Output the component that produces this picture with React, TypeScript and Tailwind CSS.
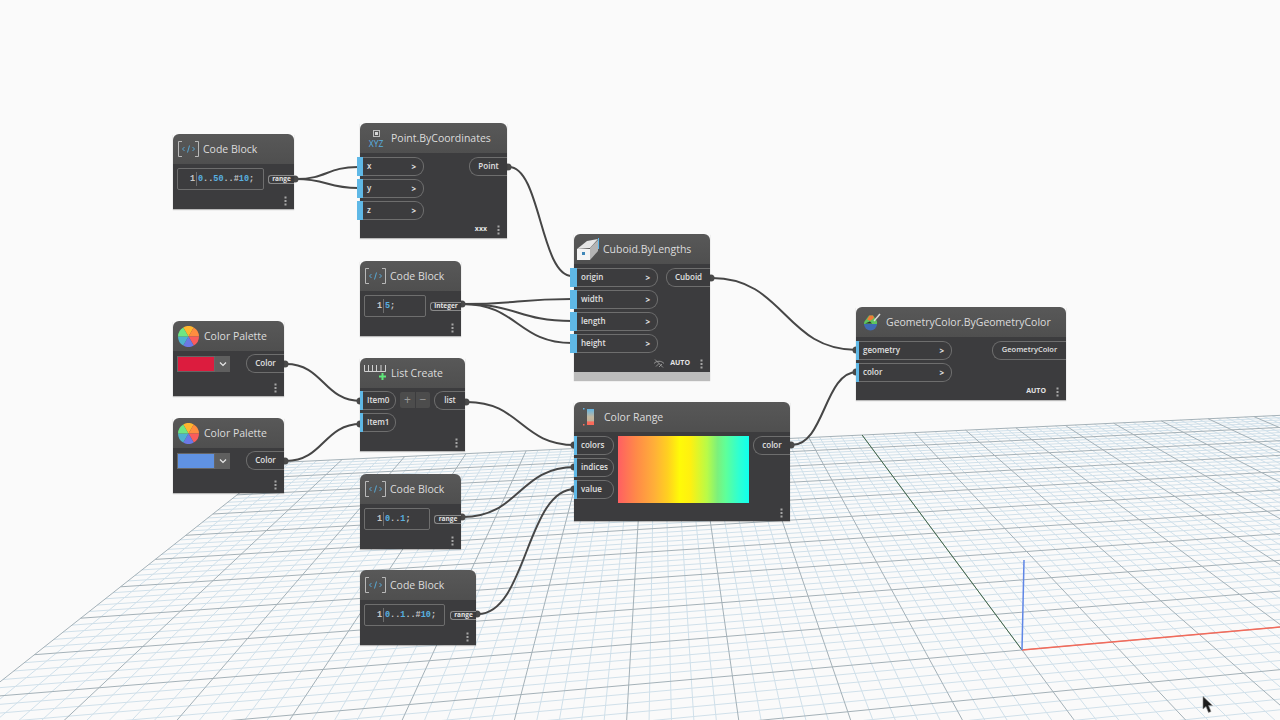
import React from "react";

// ground plane projection, fitted from the axes in the reference
const O = { x: 1022, y: 650 };
const VP_U = { x: 6326, y: 178 };
const VP_V = { x: 659, y: 162 };
const A = 0.01726;
const B = 0.07875;

function project(u: number, v: number) {
  const d = 1 + u * A + v * B;
  return {
    x: (O.x + u * A * VP_U.x + v * B * VP_V.x) / d,
    y: (O.y + u * A * VP_U.y + v * B * VP_V.y) / d,
  };
}

function gridLine(u1: number, v1: number, u2: number, v2: number) {
  const a = project(u1, v1);
  const b = project(u2, v2);
  return `M${a.x.toFixed(1)} ${a.y.toFixed(1)}L${b.x.toFixed(1)} ${b.y.toFixed(1)}`;
}

function Grid() {
  const minor: string[] = [];
  const major: string[] = [];
  for (let i = -50; i <= 50; i++) {
    const t = i / 5;
    const list = i % 5 === 0 ? major : minor;
    list.push(gridLine(t, -9.8, t, 10));
    list.push(gridLine(-10, t, 10, t));
  }
  const blueTop = project(0, 0);
  return (
    <svg className="absolute inset-0" width={1280} height={720}>
      <path d={minor.join("")} stroke="#d0e0ea" strokeWidth={1} fill="none" />
      <path d={major.join("")} stroke="#a4b1b8" strokeWidth={1} fill="none" />
      <path d={gridLine(0, 0, 0, 10)} stroke="#42684a" strokeWidth={1} fill="none" />
      <path d={gridLine(0, 0, 10, 0)} stroke="#f46a5a" strokeWidth={1.5} fill="none" />
      <path d={`M${blueTop.x} ${blueTop.y}L1024 560`} stroke="#5f86e6" strokeWidth={1.5} fill="none" />
    </svg>
  );
}

const wires: [number, number, number, number][] = [
  [296, 179, 358, 167],
  [296, 179, 358, 188],
  [509, 167, 572, 276],
  [463, 304, 572, 299],
  [463, 304, 572, 321],
  [463, 304, 572, 343],
  [712, 278, 857, 350],
  [286, 364, 361, 401],
  [286, 461, 361, 424],
  [467, 402, 575, 445],
  [463, 517, 575, 467],
  [478, 614, 575, 489],
  [792, 445, 857, 372],
];

const pins: [number, number][] = [
  [295, 179], [508, 167], [462, 304], [711, 278], [285, 364], [285, 461],
  [466, 402], [462, 517], [477, 614], [791, 445],
  [360, 401], [360, 424], [574, 445], [574, 467], [574, 489], [856, 350], [856, 372],
];

function Wires() {
  return (
    <svg className="absolute inset-0" width={1280} height={720}>
      {wires.map(([x1, y1, x2, y2], i) => {
        const mx = (x1 + x2) / 2;
        return (
          <path
            key={i}
            d={`M${x1} ${y1}C${mx} ${y1} ${mx} ${y2} ${x2} ${y2}`}
            stroke="#464646"
            strokeWidth={2}
            fill="none"
          />
        );
      })}
      {pins.map(([x, y], i) => (
        <circle key={i} cx={x} cy={y} r={3.5} fill="#4a4a4a" />
      ))}
    </svg>
  );
}

function Dots() {
  return (
    <svg width={3} height={10} viewBox="0 0 3 10">
      <rect x={0.5} y={0.5} width={2} height={2} fill="#a6a6a6" />
      <rect x={0.5} y={4} width={2} height={2} fill="#a6a6a6" />
      <rect x={0.5} y={7.5} width={2} height={2} fill="#a6a6a6" />
    </svg>
  );
}

function CodeIcon() {
  return (
    <svg width={21} height={16} viewBox="0 0 21 16" fill="none" className="shrink-0">
      <path d="M4 .5H.5v15H4M17 .5h3.500v15H17" stroke="#b8b8b8" />
      <path d="M6.500 6 4.500 8 6.500 10M14.500 6 16.500 8 14.500 10" stroke="#58b0e0" strokeWidth={0.9} />
      <path d="M11.500 4.500 9.500 11.500" stroke="#58b0e0" strokeWidth={0.9} />
    </svg>
  );
}

function PointIcon() {
  return (
    <div className="flex flex-col items-center w-[22px] shrink-0 mt-[2px]">
      <svg width={7} height={7} viewBox="0 0 7 7" fill="none">
        <rect x={0.5} y={0.5} width={6} height={6} stroke="#bdbdbd" />
        <rect x={2} y={2} width={3} height={3} fill="#d8d8d8" />
      </svg>
      <span className="text-[8.5px] leading-[10px] mt-[2px] text-[#58b0e0]">XYZ</span>
    </div>
  );
}

function wedge(start: number, end: number) {
  const r = 10.5;
  const p = (deg: number) => {
    const t = (deg * Math.PI) / 180;
    return `${(10.5 + r * Math.sin(t)).toFixed(2)} ${(10.5 - r * Math.cos(t)).toFixed(2)}`;
  };
  return `M10.5 10.5L${p(start)}A${r} ${r} 0 0 1 ${p(end)}Z`;
}

function WheelIcon() {
  const colors = ["#ffb52e", "#ff8d3f", "#fa5c5c", "#6c78e6", "#4fb2cf", "#6fe682"];
  return (
    <svg width={21} height={21} viewBox="0 0 21 21" className="shrink-0 mr-[1px]">
      {colors.map((c, i) => (
        <path key={c} d={wedge(-30 + i * 60, 30 + i * 60)} fill={c} />
      ))}
    </svg>
  );
}

function ListIcon() {
  return (
    <svg width={23} height={20} viewBox="0 0 23 20" fill="none" className="shrink-0 mt-[2px] -ml-[1px]">
      <path d="M.5 1v6.500h21V1M4.500 1v6.500M8.500 1v6.500M12.500 1v6.500M17 1v6.500M21.500 1v6.500" stroke="#d0d0d0" />
      <path d="M18.500 9v7M15 12.500h7" stroke="#5fe87a" strokeWidth={2} />
    </svg>
  );
}

function CuboidIcon() {
  return (
    <svg width={23} height={24} viewBox="0 0 23 24" className="shrink-0 -ml-[3px]">
      <path d="M1 12 11 4 22 2 14 11Z" fill="#e6e6e6" />
      <path d="M1 12H14V23H1Z" fill="#f4f4f4" />
      <path d="M14 11 22 3V14L14 23Z" fill="#b4b4b4" />
      <path d="M22.500 1V12" stroke="#5fb8ea" strokeWidth={1} />
      <rect x={6} y={15} width={3} height={3} fill="#3f87b8" />
    </svg>
  );
}

function RangeIcon() {
  return (
    <svg width={17} height={18} viewBox="0 0 17 18" className="shrink-0 ml-[4px]">
      <defs>
        <linearGradient id="rangeBar" x1="0" y1="0" x2="0" y2="1">
          <stop offset="0" stopColor="#62b4e2" />
          <stop offset="0.5" stopColor="#c4b8a0" />
          <stop offset="0.75" stopColor="#bdb29c" />
          <stop offset="0.8" stopColor="#fa6a5a" />
          <stop offset="1" stopColor="#fa6a5a" />
        </linearGradient>
      </defs>
      <rect x={4} y={1} width={7} height={16} fill="url(#rangeBar)" />
      <rect x={0} y={0} width={1.500} height={1.500} fill="#62b4e2" />
      <rect x={0} y={16} width={1.500} height={1.500} fill="#fa6a5a" />
    </svg>
  );
}

function GeometryIcon() {
  return (
    <svg width={19} height={18} viewBox="0 0 19 18" className="shrink-0 ml-[2px]">
      <path d="M1 11a6.500 6.500 0 0 0 13 0Z" fill="#3f6bb4" />
      <path d="M1 11a6.500 6.500 0 0 1 2-4.500L6 2.500h4l3 4a6.500 6.500 0 0 1 1 4.500Z" fill="#5ec45e" />
      <path d="M4 6.500 6.500 2.500h3.500L11 5 7 8Z" fill="#f07a38" />
      <path d="M2 10.500 7 8.500l2 2Z" fill="#2e2e2e" />
      <path d="M11 8 17 1" stroke="#d8d8d8" strokeWidth={1.500} />
    </svg>
  );
}

function Freeze() {
  return (
    <svg width={12} height={9} viewBox="0 0 12 9" fill="none" stroke="#a8a8a8" strokeWidth={0.8}>
      <path d="M1 4.500C3.500 1.500 8.500 1.500 11 4.500M3 7.500 6 4.500M6 8 9 5" />
      <path d="M2 .5 10 8.500" />
    </svg>
  );
}

function Port({ label, strip, w }: { label: string; strip: string; w: string }) {
  return (
    <div className={`relative flex items-center justify-between h-[19px] pl-[7px] pr-[7px] border border-l-0 border-[#6e6e6e] rounded-r-[9px] ${w}`}>
      <span className={`absolute top-[-1px] bottom-[-1px] bg-[#5fb8e6] ${strip}`} />
      <span className="relative mt-[-2px] text-[8px] font-semibold text-[#e0e0e0]">{label}</span>
      <span className="text-[8px] font-bold text-[#e4e4e4]">&gt;</span>
    </div>
  );
}

function PlainPort({ label, strip, w }: { label: string; strip: string; w: string }) {
  return (
    <div className={`relative flex items-center h-[19px] pl-[7px] border border-l-0 border-[#6e6e6e] rounded-r-[9px] ${w}`}>
      <span className={`absolute top-[-1px] bottom-[-1px] bg-[#5fb8e6] ${strip}`} />
      <span className="mt-[-2px] text-[8px] font-semibold text-[#e0e0e0]">{label}</span>
    </div>
  );
}

function Output({ label, w, size = "text-[8px]" }: { label: string; w: string; size?: string }) {
  return (
    <div className={`flex items-center justify-center h-[19px] border border-r-0 border-[#6e6e6e] rounded-l-[9px] ${w}`}>
      <span className={`mt-[-2px] font-semibold text-[#e0e0e0] ${size}`}>{label}</span>
    </div>
  );
}

function Node({
  className,
  title,
  icon,
  footer,
  children,
  strip,
}: {
  className: string;
  title: string;
  icon: React.ReactNode;
  footer?: React.ReactNode;
  children: React.ReactNode;
  strip?: boolean;
}) {
  return (
    <div className={`absolute flex flex-col shadow-[0_1px_1px_rgba(0,0,0,0.25)] ${className}`}>
      <div className="flex items-center gap-[4px] h-[30px] shrink-0 pl-[5px] rounded-t-[6px] bg-[linear-gradient(#585858,#4f4f4f)]">
        {icon}
        <span className="text-[10.5px] leading-none text-[#dcdcdc] whitespace-nowrap">{title}</span>
      </div>
      <div className="flex-1 flex flex-col min-h-0 bg-[#3c3c3e]">
        <div className="flex-1 pt-[4px]">{children}</div>
        <div className="flex items-center justify-end gap-[10px] h-[17px] pr-[7px] shrink-0">
          {footer}
          <Dots />
        </div>
      </div>
      {strip && <div className="h-[8px] shrink-0 bg-[#bcbcbc]" />}
    </div>
  );
}

// digits are blue in the code editor, punctuation stays light
function CodeText({ code }: { code: string }) {
  const parts = code.split(/(\d+)/).filter(Boolean);
  return (
    <span className="pl-[1px] whitespace-nowrap">
      {parts.map((p, i) => (
        <span key={i} className={/\d/.test(p) ? "text-[#58b0e0]" : "text-[#c8c8c8]"}>
          {p}
        </span>
      ))}
    </span>
  );
}

function CodeRow({ code, label, editor, out }: { code: string; label: string; editor: string; out: string }) {
  return (
    <div className="flex items-center justify-between pl-[4px]">
      <div className={`flex items-center h-[22px] border border-[#6e6e6e] rounded-[2px] font-['Liberation_Mono',monospace] font-bold text-[8.5px] ${editor}`}>
        <span className="w-[19px] text-right pr-[1px] text-[#c8c8c8] border-r border-[#6e6e6e] leading-[14px]">1</span>
        <CodeText code={code} />
      </div>
      <div className={`flex items-center justify-center h-[9px] border border-r-0 border-[#8a8a8a] rounded-l-[3px] ${out}`}>
        <span className="text-[6.5px] font-bold leading-none text-[#e4e4e4]">{label}</span>
      </div>
    </div>
  );
}

function Swatch({ color }: { color: string }) {
  return (
    <div className="flex items-center justify-between pl-[4px]">
      <div className="flex w-[53px] h-[16px] bg-[#5f5f5f]">
        <div className={`w-[38px] h-full border border-[#666] ${color}`} />
        <div className="flex-1 flex items-center justify-center">
          <svg width={8} height={5} viewBox="0 0 8 5" fill="none" stroke="#e8e8e8" strokeWidth={1.200}>
            <path d="M1 .5 4 3.500 7 .5" />
          </svg>
        </div>
      </div>
      <Output label="Color" w="w-[38px] mt-[-1px]" />
    </div>
  );
}

const auto = <span className="text-[7px] font-bold text-[#e4e4e4]">AUTO</span>;

export default function App() {
  return (
    <div className="relative w-[1280px] h-[720px] overflow-hidden bg-[#fafafa] font-['Open_Sans',sans-serif]">
      <Grid />
      <Wires />

      <Node className="left-[173px] top-[134px] w-[121px] h-[75px]" title="Code Block" icon={<CodeIcon />}>
        <CodeRow code="0..50..#10;" label="range" editor="w-[87px]" out="w-[26px]" />
      </Node>

      <Node
        className="left-[360px] top-[123px] w-[147px] h-[115px]"
        title="Point.ByCoordinates"
        icon={<PointIcon />}
        footer={<span className="text-[7px] font-bold text-[#e4e4e4]">xxx</span>}
      >
        <div className="flex justify-between">
          <div className="flex flex-col gap-[3px]">
            <Port label="x" w="w-[64px]" strip="-left-[3px] w-[6px]" />
            <Port label="y" w="w-[64px]" strip="-left-[3px] w-[6px]" />
            <Port label="z" w="w-[64px]" strip="-left-[3px] w-[6px]" />
          </div>
          <Output label="Point" w="w-[38px]" />
        </div>
      </Node>

      <Node className="left-[360px] top-[261px] w-[101px] h-[75px]" title="Code Block" icon={<CodeIcon />}>
        <CodeRow code="5;" label="integer" editor="w-[62px]" out="w-[31px]" />
      </Node>

      <Node
        className="left-[574px] top-[234px] w-[136px] h-[146px]"
        title="Cuboid.ByLengths"
        icon={<CuboidIcon />}
        strip
        footer={
          <div className="flex items-center gap-[5px]">
            <Freeze />
            {auto}
          </div>
        }
      >
        <div className="flex justify-between">
          <div className="flex flex-col gap-[3px]">
            <Port label="origin" w="w-[84px]" strip="-left-[4px] w-[7px]" />
            <Port label="width" w="w-[84px]" strip="-left-[4px] w-[7px]" />
            <Port label="length" w="w-[84px]" strip="-left-[4px] w-[7px]" />
            <Port label="height" w="w-[84px]" strip="-left-[4px] w-[7px]" />
          </div>
          <Output label="Cuboid" w="w-[44px]" />
        </div>
      </Node>

      <Node className="left-[173px] top-[321px] w-[111px] h-[75px]" title="Color Palette" icon={<WheelIcon />}>
        <Swatch color="bg-[#dc1c3e]" />
      </Node>

      <Node className="left-[173px] top-[418px] w-[111px] h-[75px]" title="Color Palette" icon={<WheelIcon />}>
        <Swatch color="bg-[#6092e2]" />
      </Node>

      <Node className="left-[360px] top-[358px] w-[105px] h-[93px]" title="List Create" icon={<ListIcon />}>
        <div className="flex justify-between">
          <div className="flex flex-col gap-[3px] mt-[-1px]">
            <PlainPort label="Item0" w="w-[36px]" strip="left-0 w-[3px]" />
            <PlainPort label="Item1" w="w-[36px]" strip="left-0 w-[3px]" />
          </div>
          <div className="flex h-[16px] ml-[4px] mr-auto gap-px text-[#9a9a9a]">
            <span className="w-[15px] text-center bg-[#4c4c4c] rounded-l-[2px] text-[12px] leading-[16px]">+</span>
            <span className="w-[14px] text-center bg-[#4c4c4c] rounded-r-[2px] text-[12px] leading-[16px]">−</span>
          </div>
          <Output label="list" w="w-[31px] mt-[-1px]" />
        </div>
      </Node>

      <Node className="left-[360px] top-[474px] w-[101px] h-[75px]" title="Code Block" icon={<CodeIcon />}>
        <CodeRow code="0..1;" label="range" editor="w-[66px]" out="w-[27px]" />
      </Node>

      <Node className="left-[360px] top-[570px] w-[116px] h-[75px]" title="Code Block" icon={<CodeIcon />}>
        <CodeRow code="0..1..#10;" label="range" editor="w-[81px]" out="w-[26px]" />
      </Node>

      <Node className="left-[574px] top-[402px] w-[216px] h-[119px]" title="Color Range" icon={<RangeIcon />}>
        <div className="flex justify-between">
          <div className="flex flex-col gap-[3px]">
            <PlainPort label="colors" w="w-[40px]" strip="left-0 w-[3px]" />
            <PlainPort label="indices" w="w-[40px]" strip="left-0 w-[3px]" />
            <PlainPort label="value" w="w-[40px]" strip="left-0 w-[3px]" />
          </div>
          <div className="w-[131px] h-[67px] bg-[linear-gradient(90deg,#ff5f62_0%,#ff8a48_14%,#ffb038_28%,#ffd020_38%,#fffa08_47%,#fff010_55%,#b8fb48_68%,#7cf07c_76%,#60ff98_82%,#30ffd0_92%,#10ffee_100%)]" />
          <Output label="color" w="w-[37px]" />
        </div>
      </Node>

      <Node
        className="left-[856px] top-[307px] w-[210px] h-[93px]"
        title="GeometryColor.ByGeometryColor"
        icon={<GeometryIcon />}
        footer={auto}
      >
        <div className="flex justify-between">
          <div className="flex flex-col gap-[3px]">
            <Port label="geometry" w="w-[96px]" strip="left-0 w-[3px]" />
            <Port label="color" w="w-[96px]" strip="left-0 w-[3px]" />
          </div>
          <Output label="GeometryColor" w="w-[74px]" size="text-[7.5px]" />
        </div>
      </Node>

      <svg className="absolute left-[1202px] top-[696px]" width={12} height={18} viewBox="0 0 12 18">
        <path d="M1 .5V13L4 10.500 6.500 16.500 9 15.500 6.500 9.500H10.500Z" fill="#1c1c1c" stroke="#8a8a8a" strokeWidth={0.6} />
      </svg>
    </div>
  );
}
